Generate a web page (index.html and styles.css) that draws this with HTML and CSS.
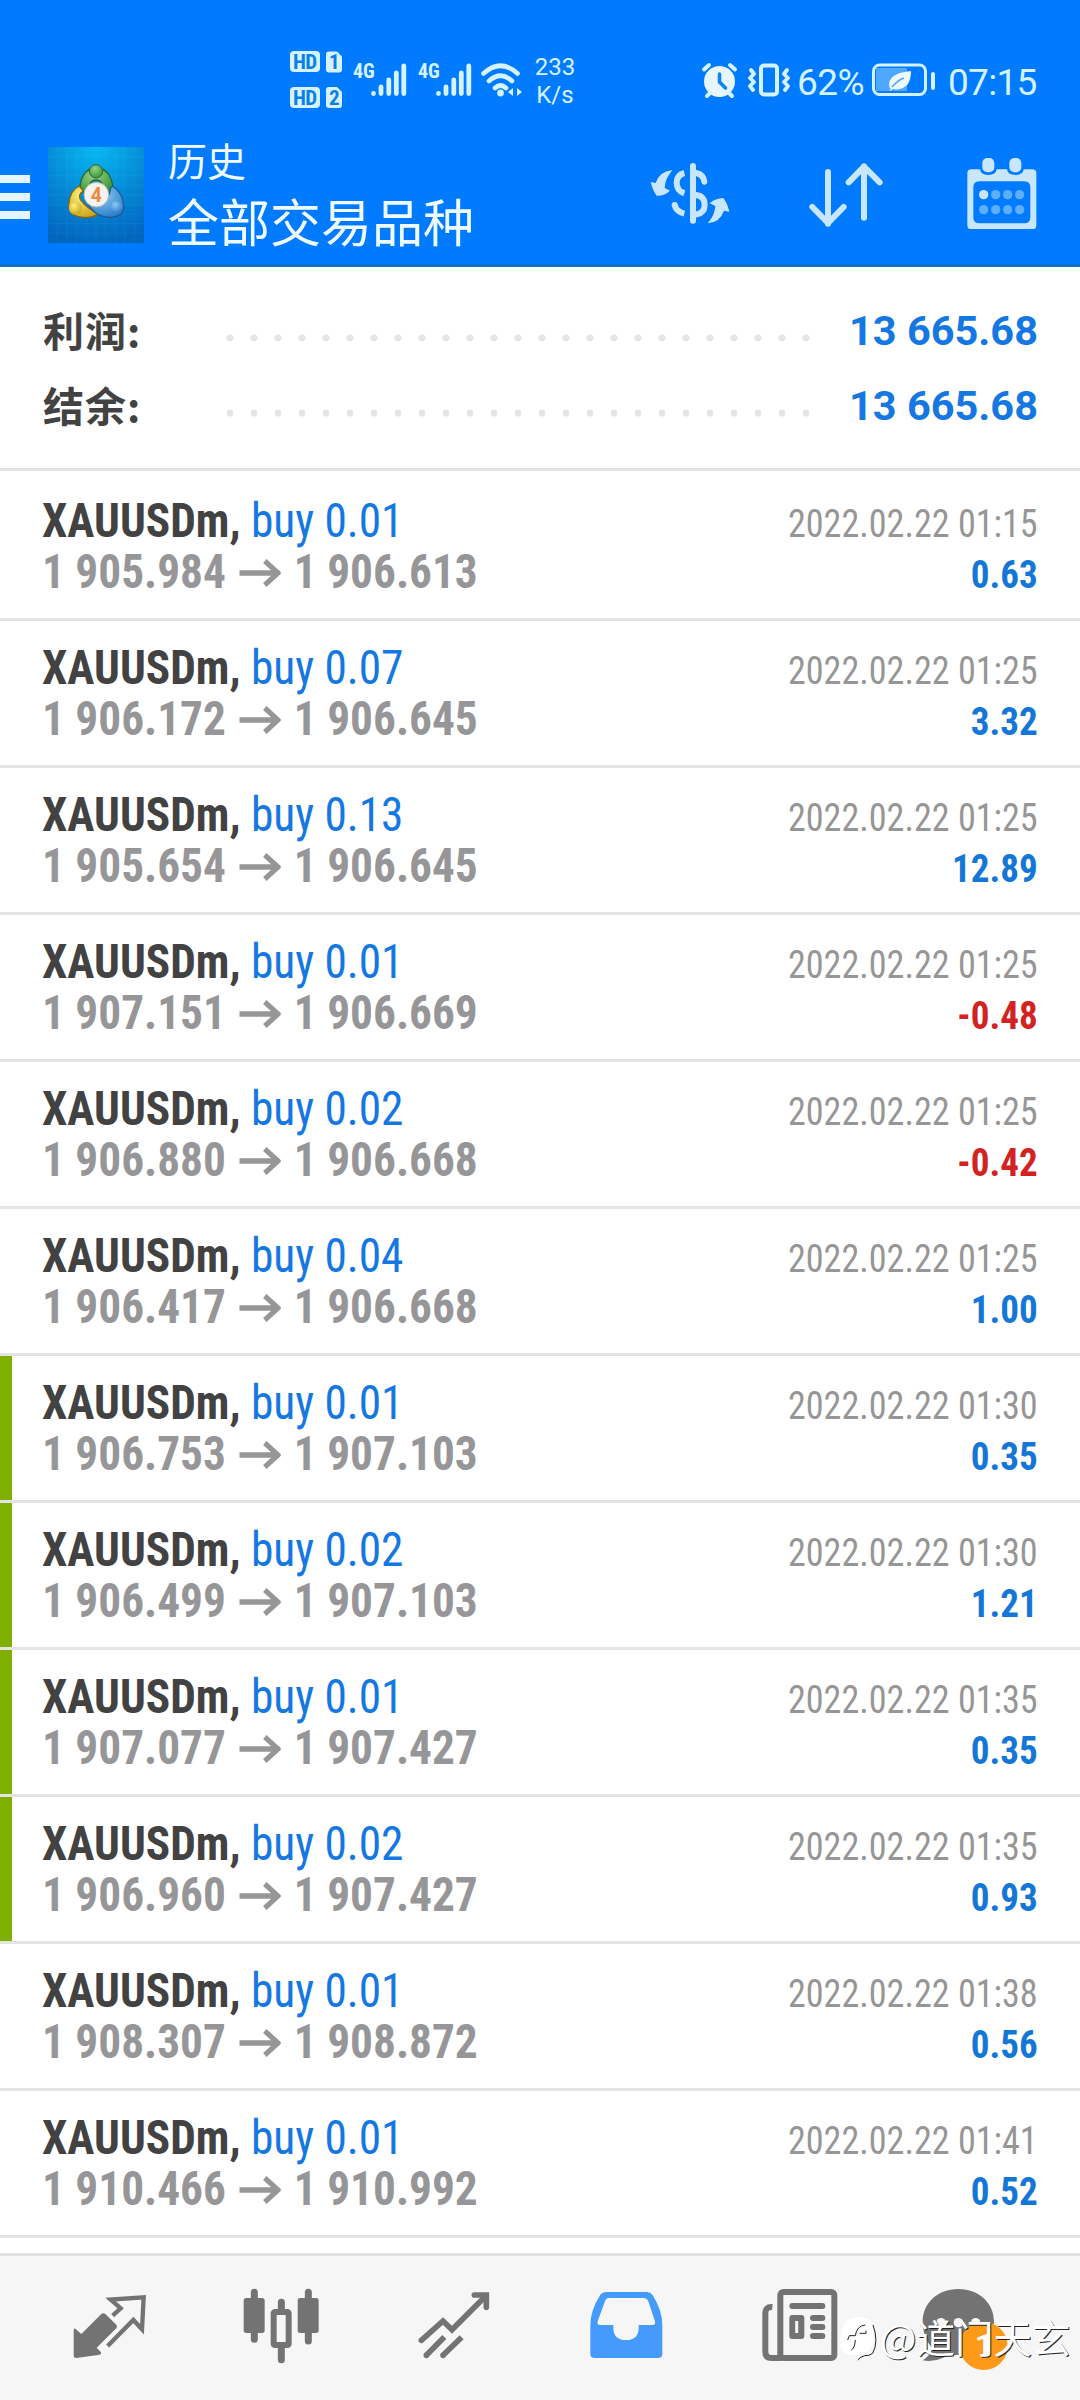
FILE: index.html
```html
<!DOCTYPE html>
<html lang="zh-CN">
<head>
<meta charset="utf-8">
<title>历史</title>
<link rel="stylesheet" href="styles.css">
</head>
<body>
<div class="screen">
  <div class="status">
    <svg class="signals" width="232" height="64" viewBox="0 0 232 64">
      <g fill="#d4f3ff">
        <rect x="0" y="3" width="30" height="21" rx="4"/><path d="M39 3.500h8l5 5v13a3 3 0 0 1-3 3h-10a3 3 0 0 1-3-3v-15a3 3 0 0 1 3-3z"/>
        <rect x="0" y="39" width="30" height="21" rx="4"/><path d="M39 39h8l5 5v13a3 3 0 0 1-3 3h-10a3 3 0 0 1-3-3v-15a3 3 0 0 1 3-3z"/>
      </g>
      <g class="hd"><text x="3" y="20.500" textLength="24">HD</text><text x="39" y="21">1</text><text x="3" y="56.500" textLength="24">HD</text><text x="39" y="57">2</text></g>
      <g class="net"><text x="63" y="30">4G</text><text x="128" y="30">4G</text></g>
      <g stroke="#d4f3ff" stroke-width="4.800" stroke-linecap="round">
        <path d="M83.500 45.500v.1M91 39v6.500M98.800 32v13.500M106.300 25v20.500M113.800 18v27.500"/>
        <path d="M148.500 45.500v.1M156 39v6.500M163.800 32v13.500M171.300 25v20.500M178.800 18v27.500"/>
        <path fill="none" d="M193.500 25.500Q210.500 10 227.500 25.500M199 33Q210.500 22.500 222 33M205 40Q210.500 35 216 40" stroke-width="4.600"/>
      </g>
      <g fill="#d4f3ff"><circle cx="210.500" cy="45" r="3.400"/><path d="M218 44l5-4v8zM232 44l-5-4v8z"/></g>
    </svg>
    <div class="speed"><span>233</span><span>K/s</span></div>
    <svg class="alarm" width="88" height="36" viewBox="0 0 88 36">
      <circle cx="17.500" cy="19.500" r="15.500" fill="#e6f6ff"/>
      <path d="M2 7.500L7 3M28 3l5 4.500M8 31l-3 3M27 31l3 3" stroke="#d4f3ff" stroke-width="4" stroke-linecap="round"/>
      <path d="M17.500 12v8l6 6" fill="none" stroke="#1286e8" stroke-width="3.600" stroke-linecap="round"/>
      <rect x="59" y="3.500" width="16" height="29" rx="3" fill="none" stroke="#d4f3ff" stroke-width="4"/>
      <path d="M49 8l3 4-4 4 4 4-4 4 3 4M85 8l-3 4 4 4-4 4 4 4-3 4" fill="none" stroke="#d4f3ff" stroke-width="3.800" stroke-linecap="round" stroke-linejoin="round"/>
    </svg>
    <span class="battery-text">62%</span>
    <svg width="64" height="36" viewBox="0 0 64 36">
      <rect x="4" y="6" width="31" height="23" fill="#4fa8ff"/>
      <rect x="1.500" y="3" width="52" height="29.500" rx="6" fill="none" stroke="#d4f3ff" stroke-width="3"/>
      <path d="M61 12v14" stroke="#d4f3ff" stroke-width="4" stroke-linecap="round"/>
      <path d="M39 9Q18 11 17 22q0 4 2 5-2 1-1 2l3-2q9 2 15-5 3-5 3-13z" fill="#edf9ff"/><path d="M20 25q6-7 12-9" stroke="#4fa8ff" stroke-width="1.500" fill="none"/>
    </svg>
    <span class="clock">07:15</span>
  </div>

  <header class="appbar">
    <div class="menu"><i></i><i></i><i></i></div>
    <svg class="logo" width="96" height="96" viewBox="0 0 288 288">
      <defs>
        <radialGradient id="sky" cx=".5" cy="0" r="1"><stop offset="0" stop-color="#08b9f2"/><stop offset=".55" stop-color="#0588d6"/><stop offset="1" stop-color="#0266bf"/></radialGradient>
        <radialGradient id="green" cx=".4" cy=".3" r=".8"><stop offset="0" stop-color="#9bd080"/><stop offset="1" stop-color="#2d8f35"/></radialGradient>
        <radialGradient id="gold" cx=".4" cy=".3" r=".8"><stop offset="0" stop-color="#fff07a"/><stop offset="1" stop-color="#c39a12"/></radialGradient>
        <radialGradient id="blue" cx=".4" cy=".3" r=".8"><stop offset="0" stop-color="#8ccbf5"/><stop offset="1" stop-color="#2276c4"/></radialGradient>
      </defs>
      <rect width="288" height="288" fill="url(#sky)"/>
      <path d="M29 0v288M57 0v288M86 0v288M115 0v288M144 0v288M173 0v288M202 0v288M230 0v288M259 0v288M0 29h288M0 57h288M0 86h288M0 115h288M0 144h288M0 173h288M0 202h288M0 230h288M0 259h288" stroke="#5fd0ff" stroke-opacity=".14" stroke-width="2"/>
      <path d="M144 63q30 0 42 27 14 28 5 47-20-5-30-28-4-10-17-10t-18 12q-8 19-27 27-8-34 10-57 12-18 35-18z" fill="url(#green)" stroke="#246b35" stroke-width="4"/>
      <path d="M94 117q-29 13-32 56-2 37 52 39 24-1 40-12-34-12-57-42-7-17 9-26z" fill="url(#gold)" stroke="#80660f" stroke-width="4"/>
      <path d="M194 117q31 21 34 61 0 31-40 33-48 0-69-43 28 6 51-9 16-13 18-36z" fill="url(#blue)" stroke="#195a9c" stroke-width="4"/>
      <circle cx="144" cy="73" r="20" fill="url(#green)" stroke="#246b35" stroke-width="3"/>
      <circle cx="82" cy="184" r="19" fill="url(#gold)"/><circle cx="205" cy="180" r="18" fill="url(#blue)"/>
      <circle cx="145" cy="143" r="37" fill="#f3f3f1" stroke="#b9b6aa" stroke-width="3"/>
      <text class="four" x="128" y="164">4</text>
    </svg>
    <div class="titles"><div class="small">历史</div><div class="large">全部交易品种</div></div>
    <svg class="act" width="80" height="72" viewBox="90 50 240 216">
      <g fill="#c8e6fd"><path d="M157 90q-37 2-50 38l-15-3q7 28 18 41 24 1 40-15l-16-8q1-28 23-53zM263 249q37-3 49-38l16 3q-7-28-18-41-24 1-41 16l17 8q-2 29-23 52z"/></g>
      <g fill="none" stroke="#c8e6fd" stroke-width="18"><path d="M219 77v164" stroke-linecap="round"/><path d="M193 98q-23 6-23 29 0 24 23 32M193 220q-24-6-29-26"/><path d="M164 194v.1" stroke-linecap="round"/><path d="M228 98q22 4 25 26M228 164q26 3 26 30 0 24-26 29" stroke-linecap="round"/></g>
    </svg>
    <svg class="act" width="80" height="72" viewBox="558 50 240 216">
      <path d="M624 95v155M577 200l47 48 47-48M732 232V78M686 126l46-47 47 47" fill="none" stroke="#c8e6fd" stroke-width="18" stroke-linecap="round" stroke-linejoin="round"/>
    </svg>
    <svg class="act" width="80" height="72" viewBox="1028 50 240 216">
      <path fill-rule="evenodd" fill="#c8e6fd" d="M1056 87h26q2 17 25 17t25-17h31q2 17 25 17t25-17h26q12 0 12 12v156q0 12-12 12h-183q-12 0-12-12V99q0-12 12-12zM1080 123q-18 0-18 18v90q0 18 18 18h135q18 0 18-18v-90q0-18-18-18z"/>
      <rect x="1089" y="53" width="36" height="43" rx="15" fill="#c8e6fd"/><rect x="1170" y="53" width="36" height="43" rx="15" fill="#c8e6fd"/>
      <circle cx="1093" cy="163" r="14" fill="#c8e6fd"/>
      <g fill="#5eaefe"><circle cx="1129" cy="163" r="14"/><circle cx="1165" cy="163" r="14"/><circle cx="1201" cy="163" r="14"/><circle cx="1093" cy="208" r="14"/><circle cx="1129" cy="208" r="14"/><circle cx="1165" cy="208" r="14"/><circle cx="1201" cy="208" r="14"/></g>
    </svg>
  </header>

  <section class="summary">
    <div class="total"><b>利润:</b><i class="dots"></i><strong>13 665.68</strong></div>
    <div class="total"><b>结余:</b><i class="dots"></i><strong>13 665.68</strong></div>
  </section>

  <svg class="defs" width="0" height="0"><symbol id="arrow" viewBox="0 0 44 28" preserveAspectRatio="none"><path d="M0 14h41M27 2l14 12-14 12" fill="none" stroke="#969699" stroke-width="5.400"/></symbol></svg>
  <main class="deals">
    <div class="deal first"><div class="left"><p class="sym"><b>XAUUSDm,</b> <span>buy 0.01</span></p><p class="price">1 905.984<svg><use href="#arrow"/></svg>1 906.613</p></div><div class="right"><p class="date">2022.02.22 01:15</p><p class="val">0.63</p></div></div>
    <div class="deal"><div class="left"><p class="sym"><b>XAUUSDm,</b> <span>buy 0.07</span></p><p class="price">1 906.172<svg><use href="#arrow"/></svg>1 906.645</p></div><div class="right"><p class="date">2022.02.22 01:25</p><p class="val">3.32</p></div></div>
    <div class="deal"><div class="left"><p class="sym"><b>XAUUSDm,</b> <span>buy 0.13</span></p><p class="price">1 905.654<svg><use href="#arrow"/></svg>1 906.645</p></div><div class="right"><p class="date">2022.02.22 01:25</p><p class="val">12.89</p></div></div>
    <div class="deal"><div class="left"><p class="sym"><b>XAUUSDm,</b> <span>buy 0.01</span></p><p class="price">1 907.151<svg><use href="#arrow"/></svg>1 906.669</p></div><div class="right"><p class="date">2022.02.22 01:25</p><p class="val loss">-0.48</p></div></div>
    <div class="deal"><div class="left"><p class="sym"><b>XAUUSDm,</b> <span>buy 0.02</span></p><p class="price">1 906.880<svg><use href="#arrow"/></svg>1 906.668</p></div><div class="right"><p class="date">2022.02.22 01:25</p><p class="val loss">-0.42</p></div></div>
    <div class="deal"><div class="left"><p class="sym"><b>XAUUSDm,</b> <span>buy 0.04</span></p><p class="price">1 906.417<svg><use href="#arrow"/></svg>1 906.668</p></div><div class="right"><p class="date">2022.02.22 01:25</p><p class="val">1.00</p></div></div>
    <div class="deal tp"><div class="left"><p class="sym"><b>XAUUSDm,</b> <span>buy 0.01</span></p><p class="price">1 906.753<svg><use href="#arrow"/></svg>1 907.103</p></div><div class="right"><p class="date">2022.02.22 01:30</p><p class="val">0.35</p></div></div>
    <div class="deal tp"><div class="left"><p class="sym"><b>XAUUSDm,</b> <span>buy 0.02</span></p><p class="price">1 906.499<svg><use href="#arrow"/></svg>1 907.103</p></div><div class="right"><p class="date">2022.02.22 01:30</p><p class="val">1.21</p></div></div>
    <div class="deal tp"><div class="left"><p class="sym"><b>XAUUSDm,</b> <span>buy 0.01</span></p><p class="price">1 907.077<svg><use href="#arrow"/></svg>1 907.427</p></div><div class="right"><p class="date">2022.02.22 01:35</p><p class="val">0.35</p></div></div>
    <div class="deal tp"><div class="left"><p class="sym"><b>XAUUSDm,</b> <span>buy 0.02</span></p><p class="price">1 906.960<svg><use href="#arrow"/></svg>1 907.427</p></div><div class="right"><p class="date">2022.02.22 01:35</p><p class="val">0.93</p></div></div>
    <div class="deal"><div class="left"><p class="sym"><b>XAUUSDm,</b> <span>buy 0.01</span></p><p class="price">1 908.307<svg><use href="#arrow"/></svg>1 908.872</p></div><div class="right"><p class="date">2022.02.22 01:38</p><p class="val">0.56</p></div></div>
    <div class="deal"><div class="left"><p class="sym"><b>XAUUSDm,</b> <span>buy 0.01</span></p><p class="price">1 910.466<svg><use href="#arrow"/></svg>1 910.992</p></div><div class="right"><p class="date">2022.02.22 01:41</p><p class="val">0.52</p></div></div>
  </main>

  <nav class="tabs">
    <svg width="80" height="80" viewBox="91 144 240 240">
      <path d="M105 265l20 17 60-60q6-5 12 0l33 32q4 5 0 11l-59 58 13 14q2 5-4 7l-70 10q-8 0-8-8v-77z" fill="#737373"/>
      <path d="M219 227l24-22-30-26 99-7-5 96-26-28-77 78" fill="none" stroke="#737373" stroke-width="13"/>
    </svg>
    <svg width="80" height="80" viewBox="607 144 240 240">
      <path d="M644 157v141M806 157v146M725 187v30M725 318v41" stroke="#737373" stroke-width="21" stroke-linecap="round"/>
      <rect x="612" y="174" width="63" height="105" rx="8" fill="#737373"/><rect x="774" y="174" width="63" height="105" rx="8" fill="#737373"/><rect x="702" y="216" width="45" height="99" rx="4" fill="#f6f6f6" stroke="#737373" stroke-width="18"/>
    </svg>
    <svg width="80" height="80" viewBox="1124 144 240 240">
      <g fill="none" stroke="#737373" stroke-width="17"><path d="M1143 301l65-58 27 26 102-102" stroke-linecap="round"/><path d="M1302 165h36v37" stroke-linecap="round"/><path d="M1212 291l-54 55M1264 292l-56 54"/></g><path d="M1158 346h.1M1208 346h.1" stroke="#737373" stroke-width="17" stroke-linecap="round"/>
    </svg>
    <svg width="80" height="80" viewBox="82 144 240 240">
      <path fill="#459bfc" d="M139 156h123q10 0 16 8 30 47 30 91v86q0 13-13 13H105q-13 0-13-13v-86q0-44 30-91 6-8 17-8z"/>
      <path fill="#f6f6f6" d="M147 174h104q10 0 15 10l20 60q3 11-8 11h-41v8q0 37-38 37t-38-37v-8h-39q-11 0-8-11l22-60q4-10 11-10z"/>
    </svg>
    <svg width="80" height="80" viewBox="598 144 240 240">
      <g fill="none" stroke="#737373" stroke-width="18"><rect x="662" y="156" width="162" height="198" rx="9"/><path d="M638 201q-21-2-21 20v114q0 19 19 19h30"/></g>
      <rect x="689" y="225" width="45" height="72" rx="9" fill="#737373"/><path d="M711 243v36" stroke="#f6f6f6" stroke-width="9"/>
      <path d="M698 198h90M760 234h28M760 261h28M760 288h28" stroke="#737373" stroke-width="18" stroke-linecap="round"/>
    </svg>
    <svg width="90" height="90" viewBox="1100 129 270 270" overflow="visible">
      <path d="M1194 147c62 0 107 42 107 98 0 65-46 100-107 100-14 0-29-1-42 7-21 10-43 13-65 9 17-11 26-24 28-37q-28-32-28-79c0-56 45-98 107-98z" fill="#737373"/>
      <g fill="#f6f6f6"><circle cx="1142" cy="248" r="14"/><circle cx="1194" cy="248" r="14"/><circle cx="1246" cy="248" r="14"/></g>
      <circle cx="1270" cy="318" r="72" fill="#ff9a19"/>
      <text class="count" x="1243" y="354">1</text>
    </svg>
  </nav>

  <div class="watermark">
    <svg width="42" height="46" viewBox="0 0 126 138">
      <path d="M25 16Q60-4 96 16q18 50-4 90l-34 13q-50 6-54-28Q0 40 25 16z" fill="#fff"/>
      <path d="M26 75l5-13h18q4-30 30-32M49 75q-2 25-12 30M62 55h19v-8M102 30q18 50-1 85-12 9-24 7-13 3-21 13" fill="none" stroke="#222" stroke-width="3"/>
    </svg><span>@道门天玄</span>
  </div>
</div>
</body>
</html>
```
FILE: styles.css
```css
* { box-sizing: border-box; }
body { margin: 0; background: #fff; font-family: Roboto, "Noto Sans CJK SC", sans-serif; }
p { margin: 0; }
.screen { position: relative; width: 1080px; height: 2400px; overflow: hidden; display: flex; flex-direction: column; }
.defs { position: absolute; }

.status { height: 130px; flex: none; background: #007bff; color: #d4f3ff; display: flex; padding: 0 0 0 290px; align-items: flex-start; }
.status svg { flex: none; margin-top: 62px; overflow: visible; }
.status .signals { margin-top: 48px; }
.hd { font: 700 21px Roboto; font-stretch: 75%; fill: #0b7fe8; }
.net { font: 700 20px Roboto; font-stretch: 75%; fill: #d4f3ff; }
.speed { display: flex; flex-direction: column; width: 54px; margin: 53px 0 0 6px; font-size: 24px; line-height: 28px; text-align: center; }
.status .alarm { margin-left: 120px; }
.battery-text, .clock { font-size: 37px; line-height: 44px; margin-top: 61px; letter-spacing: -1px; }
.battery-text { width: 74px; margin-left: 7px; letter-spacing: -.5px; }
.status .battery-text + svg { margin-left: 1px; }
.clock { margin-left: 12px; letter-spacing: -.7px; }

.appbar { height: 137px; flex: none; background: #007bff; border-bottom: 3px solid #1070c4; display: flex; align-items: flex-start; }
.menu { width: 30px; margin-top: 45px; display: flex; flex-direction: column; gap: 10px; }
.menu i { height: 8px; background: #e3f6ff; }
.logo { margin: 17px 0 0 18px; }
.four { font: 700 58px Roboto; fill: #ee8a3c; }
.titles { width: 483px; margin-left: 24px; color: #f0fbff; font-family: "Noto Sans CJK SC", sans-serif; }
.small { font-size: 39px; line-height: 50px; margin-top: 4px; }
.large { font-size: 51px; line-height: 62px; margin-top: 5px; }
.act { flex: none; margin: 27px 0 0 -1px; }
.act + .act { margin-left: 76px; }

.summary { height: 204px; flex: none; border-bottom: 3px solid #e4e4e4; padding: 27px 42px 0 43px; }
.total { display: flex; height: 75px; align-items: center; }
.total b { width: 181px; margin-top: -4px; font: 700 41px/71px "Noto Sans CJK SC"; letter-spacing: 1px; color: #424242; }
.dots { flex: none; width: 588px; height: 8px; margin: 13px 14px 0 0; background: radial-gradient(circle at 6px 4px, #e4e4e4 3px, transparent 4px) 0 0 / 24px 8px; }
.total strong { flex: 1; margin-top: -2px; text-align: right; font-size: 41.500px; color: #1477e2; white-space: nowrap; }

.deals { flex: none; font-stretch: 75%; }
.deal { height: 147px; border-bottom: 3px solid #e4e4e4; display: flex; justify-content: space-between; padding: 21px 42px 0 42px; }
.deal.first { height: 150px; padding-top: 24px; }
.left { transform: scaleX(.944); transform-origin: left; }
.left p { font-size: 48px; line-height: 51px; white-space: nowrap; }
.sym { color: #424242; }
.sym span { color: #1477e2; }
.left .price { font-weight: 700; color: #969699; }
.price svg { width: 44px; height: 28px; margin: 0 14px; vertical-align: 1px; }
.right { padding-top: 4px; text-align: right; font-size: 39px; line-height: 51px; }
.date { color: #969696; transform: scaleX(.926); transform-origin: right; }
.val { font-weight: 700; color: #1477d8; transform: scaleX(.95); transform-origin: right; }
.val.loss { color: #d32222; }
.tp { background: linear-gradient(#7fb000, #7fb000) 0 0 / 12px 144px no-repeat; }

.tabs { margin-top: 15px; height: 147px; flex: none; border-top: 3px solid #e2e2e2; background: #f6f6f6; display: grid; grid-template-columns: repeat(6, 1fr); place-items: center; padding: 0 22px 0 24px; }
.count { font: 500 100px Roboto; fill: #fff; }

.watermark { position: absolute; left: 839px; top: 2315px; display: flex; color: #fff; font: 38.500px/42px "Noto Sans CJK SC"; white-space: nowrap; }
.watermark span { text-shadow: 1px 1px 0 #222; margin-left: -1px; }
```
